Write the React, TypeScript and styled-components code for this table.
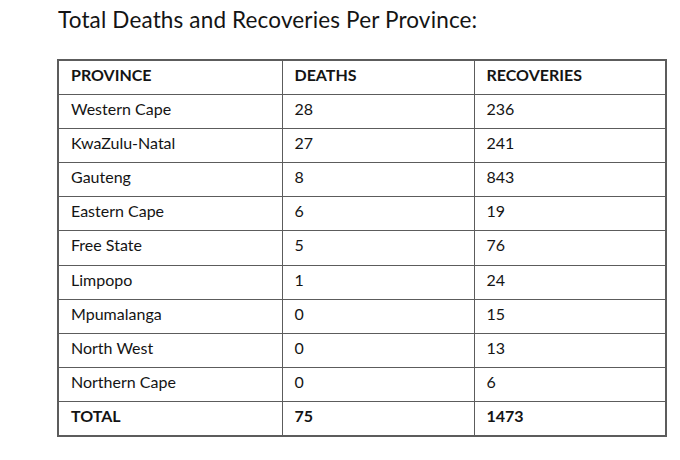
import React from "react";
import styled, { createGlobalStyle } from "styled-components";

const GlobalStyle = createGlobalStyle`
  html, body {
    margin: 0;
    padding: 0;
    background: #fff;
  }
`;

const Page = styled.div`
  width: 680px;
  height: 460px;
  box-sizing: border-box;
  padding: 7px 0 0 57px;
  font-family: "Lato", "Open Sans", sans-serif;
  color: #141414;
  overflow: hidden;
`;

const Title = styled.h1`
  margin: 0 0 26px 1px;
  font-size: 22.5px;
  font-weight: 400;
  line-height: 26px;
  letter-spacing: 0.15px;
`;

const Table = styled.table`
  width: 608px;
  border-collapse: collapse;
  table-layout: fixed;
  border: 2px solid #5c5c5c;
`;

const Row = styled.tr`
  height: 34.2px;
`;

const Cell = styled.td<{ bold?: boolean }>`
  border: 1.5px solid #5c5c5c;
  padding: 4px 12px 0;
  vertical-align: top;
  font-size: 16px;
  line-height: 20px;
  font-weight: ${(p) => (p.bold ? 700 : 400)};
  text-align: left;
`;

const rows: [string, number, number][] = [
  ["Western Cape", 28, 236],
  ["KwaZulu-Natal", 27, 241],
  ["Gauteng", 8, 843],
  ["Eastern Cape", 6, 19],
  ["Free State", 5, 76],
  ["Limpopo", 1, 24],
  ["Mpumalanga", 0, 15],
  ["North West", 0, 13],
  ["Northern Cape", 0, 6],
];

const App: React.FC = () => (
  <>
    <GlobalStyle />
    <Page>
      <Title>Total Deaths and Recoveries Per Province:</Title>
      <Table>
        <colgroup>
          <col style={{ width: 224 }} />
          <col style={{ width: 192 }} />
          <col style={{ width: 192 }} />
        </colgroup>
        <tbody>
          <Row>
            <Cell bold>PROVINCE</Cell>
            <Cell bold>DEATHS</Cell>
            <Cell bold>RECOVERIES</Cell>
          </Row>
          {rows.map(([name, deaths, recoveries]) => (
            <Row key={name}>
              <Cell>{name}</Cell>
              <Cell>{deaths}</Cell>
              <Cell>{recoveries}</Cell>
            </Row>
          ))}
          <Row>
            <Cell bold>TOTAL</Cell>
            <Cell bold>75</Cell>
            <Cell bold>1473</Cell>
          </Row>
        </tbody>
      </Table>
    </Page>
  </>
);

export default App;
